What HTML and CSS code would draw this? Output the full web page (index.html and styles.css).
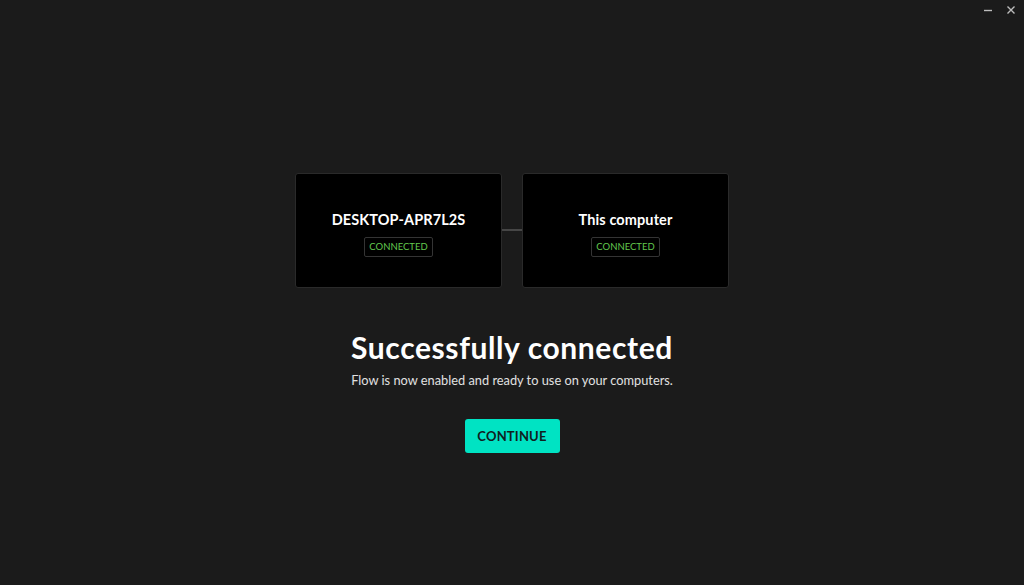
FILE: index.html
```html
<!DOCTYPE html>
<html lang="en">
<head>
    <meta charset="UTF-8" />
    <title>Flow</title>
    <link rel="stylesheet" href="styles.css">
</head>
<body>
    <div class="titlebar">
        <span class="win-btn">
            <svg width="10" height="10" viewBox="0 0 10 10"><path d="M1 5.5h8" stroke="#bdbdbd" stroke-width="1.4"/></svg>
        </span>
        <span class="win-btn">
            <svg width="10" height="10" viewBox="0 0 10 10"><path d="M1.5 1.5l7 7M8.5 1.5l-7 7" stroke="#bdbdbd" stroke-width="1.4"/></svg>
        </span>
    </div>

    <div class="main">
        <div class="computers">
            <div class="card">
                <div class="card-name">DESKTOP-APR7L2S</div>
                <div class="badge">CONNECTED</div>
            </div>
            <div class="link"></div>
            <div class="card">
                <div class="card-name">This computer</div>
                <div class="badge">CONNECTED</div>
            </div>
        </div>

        <h1 class="heading">Successfully connected</h1>
        <p class="sub">Flow is now enabled and ready to use on your computers.</p>

        <button class="continue">CONTINUE</button>
    </div>
</body>
</html>
```

FILE: styles.css
```css
* {
    box-sizing: border-box;
}

html, body {
    margin: 0;
    padding: 0;
    height: 100%;
}

body {
    background-color: rgb(27, 27, 27);
    font-family: Lato, "Noto Sans", sans-serif;
    color: #ffffff;
    overflow: hidden;
}

.titlebar {
    display: flex;
    justify-content: flex-end;
    gap: 13px;
    height: 22px;
    padding: 5px 8px 0 0;
}

.win-btn {
    display: flex;
    align-items: center;
    justify-content: center;
    width: 10px;
    height: 10px;
}

.main {
    display: flex;
    flex-direction: column;
    align-items: center;
    padding-top: 151px;
}

.computers {
    display: flex;
    align-items: center;
}

.card {
    width: 207px;
    height: 115px;
    background-color: #000000;
    border: 1px solid rgb(42, 42, 42);
    border-radius: 3px;
    display: flex;
    flex-direction: column;
    align-items: center;
    padding-top: 37px;
}

.card-name {
    font-size: 14.5px;
    font-weight: 700;
    line-height: 18px;
    letter-spacing: 0.1px;
}

.card-name + .badge {
    margin-top: 8px;
}

.badge {
    height: 20px;
    padding: 0 4px;
    border: 1px solid rgb(52, 52, 52);
    border-radius: 2px;
    color: rgb(98, 200, 78);
    font-size: 9.5px;
    line-height: 18px;
}

.link {
    width: 20px;
    height: 2px;
    margin-top: -2px;
    background-color: rgb(70, 70, 70);
}

.heading {
    margin: 42px 0 0 0;
    font-size: 30px;
    font-weight: 700;
    line-height: 34px;
    letter-spacing: 0.6px;
}

.sub {
    margin: 8px 0 0 0;
    font-size: 12.8px;
    line-height: 16px;
    color: rgb(225, 225, 225);
}

.continue {
    margin-top: 31px;
    width: 95px;
    height: 34px;
    border: 0;
    border-radius: 3px;
    background-color: rgb(0, 227, 195);
    color: rgb(16, 32, 30);
    font-family: Lato, "Noto Sans", sans-serif;
    font-size: 13px;
    font-weight: 700;
    letter-spacing: 0.2px;
}
```
